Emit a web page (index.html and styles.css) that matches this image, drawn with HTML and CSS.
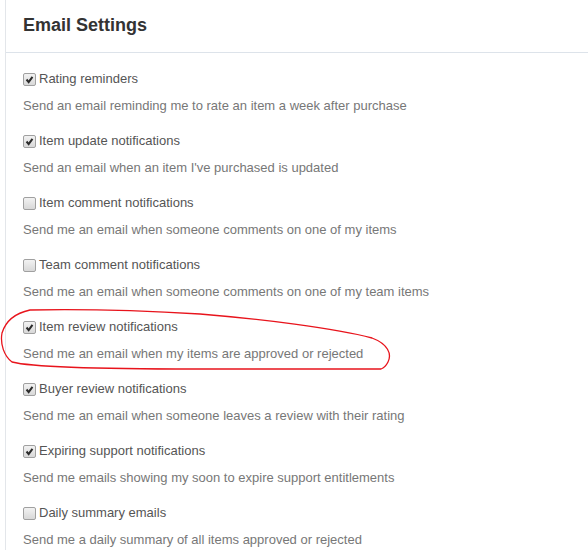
FILE: index.html
```html
<!DOCTYPE html>
<html lang="en">
<head>
    <meta charset="UTF-8">
    <title>Email Settings</title>
    <link rel="stylesheet" href="styles.css">
</head>
<body>
    <div class="panel">
        <div class="panel-header">
            <h2 class="panel-title">Email Settings</h2>
        </div>
        <div class="settings">
            <div class="setting">
                <label class="setting-label"><span class="box checked"><svg viewBox="0 0 13 13"><path d="M3 6.5 L5.5 9.5 L10 3.5" /></svg></span>Rating reminders</label>
                <p class="setting-desc">Send an email reminding me to rate an item a week after purchase</p>
            </div>
            <div class="setting">
                <label class="setting-label"><span class="box checked"><svg viewBox="0 0 13 13"><path d="M3 6.5 L5.5 9.5 L10 3.5" /></svg></span>Item update notifications</label>
                <p class="setting-desc">Send an email when an item I've purchased is updated</p>
            </div>
            <div class="setting">
                <label class="setting-label"><span class="box"></span>Item comment notifications</label>
                <p class="setting-desc">Send me an email when someone comments on one of my items</p>
            </div>
            <div class="setting">
                <label class="setting-label"><span class="box"></span>Team comment notifications</label>
                <p class="setting-desc">Send me an email when someone comments on one of my team items</p>
            </div>
            <div class="setting">
                <label class="setting-label"><span class="box checked"><svg viewBox="0 0 13 13"><path d="M3 6.5 L5.5 9.5 L10 3.5" /></svg></span>Item review notifications</label>
                <p class="setting-desc">Send me an email when my items are approved or rejected</p>
            </div>
            <div class="setting">
                <label class="setting-label"><span class="box checked"><svg viewBox="0 0 13 13"><path d="M3 6.5 L5.5 9.5 L10 3.5" /></svg></span>Buyer review notifications</label>
                <p class="setting-desc">Send me an email when someone leaves a review with their rating</p>
            </div>
            <div class="setting">
                <label class="setting-label"><span class="box checked"><svg viewBox="0 0 13 13"><path d="M3 6.5 L5.5 9.5 L10 3.5" /></svg></span>Expiring support notifications</label>
                <p class="setting-desc">Send me emails showing my soon to expire support entitlements</p>
            </div>
            <div class="setting">
                <label class="setting-label"><span class="box"></span>Daily summary emails</label>
                <p class="setting-desc">Send me a daily summary of all items approved or rejected</p>
            </div>
        </div>
    </div>

    <!-- hand-drawn annotation -->
    <svg class="scribble" width="400" height="80" viewBox="0 300 400 80">
        <path d="M200 314 C260 319 335 328 372 338 C388 344 392 354 388 362 C386 366 384 368 381 369 L195 369 C110 369 35 368 12 362 C4 356 0 344 2 333 C6 320 16 313 30 310 C80 309 150 311 200 314 Z" />
    </svg>
</body>
</html>
```

FILE: styles.css
```css
* { margin: 0; padding: 0; box-sizing: border-box; }

body {
    font-family: "Liberation Sans", Arial, sans-serif;
    background: #ffffff;
    color: #555555;
    height: 550px;
    overflow: hidden;
    position: relative;
}

.panel {
    margin-left: 5px;
    border-left: 1px solid #e3e6ea;
    min-height: 550px;
}

.panel-header {
    padding: 15px 17px 17px;
    border-bottom: 1px solid #dde3ea;
}

.panel-title {
    font-size: 18px;
    line-height: 20px;
    font-weight: bold;
    color: #333333;
}

.settings {
    padding: 17px 17px 0;
}

.setting {
    margin-bottom: 17px;
}

.setting-label {
    display: flex;
    align-items: center;
    font-size: 13px;
    line-height: 18px;
    color: #555555;
}

.box {
    width: 13px;
    height: 13px;
    margin-right: 3px;
    border: 1px solid #a0a0a0;
    border-radius: 2px;
    background: linear-gradient(180deg, #f2f2f2, #d8d8d8);
    display: inline-flex;
}

.box svg {
    width: 11px;
    height: 11px;
}

.box svg path {
    fill: none;
    stroke: #2b2b2b;
    stroke-width: 2.4;
}

.setting-desc {
    margin-top: 9px;
    font-size: 13px;
    line-height: 18px;
    color: #777777;
}

.scribble {
    position: absolute;
    left: 0;
    top: 300px;
    pointer-events: none;
}

.scribble path {
    fill: none;
    stroke: #e8141c;
    stroke-width: 1.3;
}
```
